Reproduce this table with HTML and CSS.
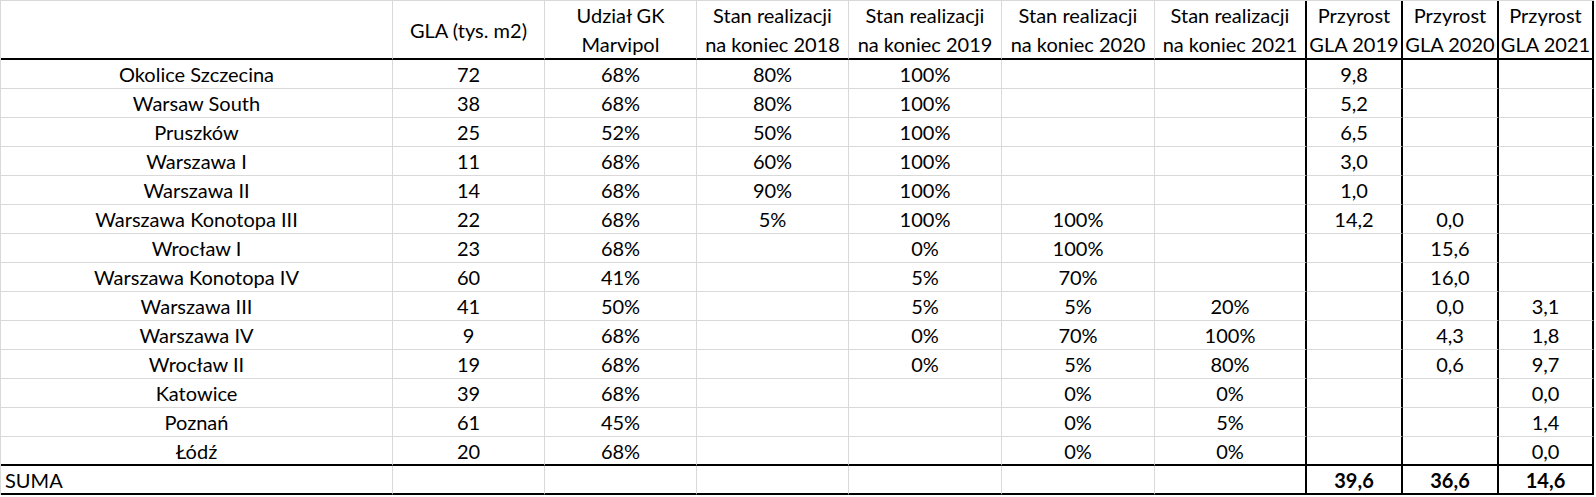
FILE: index.html
```html
<!DOCTYPE html>
<html lang="pl">
<head>
<meta charset="utf-8">
<title>GLA</title>
<link rel="stylesheet" href="styles.css">
</head>
<body>
<div class="sheet" role="table">
  <div class="row head" role="row">
    <div class="c" role="columnheader"></div>
    <div class="c" role="columnheader">GLA (tys. m2)</div>
    <div class="c" role="columnheader">Udział GK<br>Marvipol</div>
    <div class="c" role="columnheader">Stan realizacji<br>na koniec 2018</div>
    <div class="c" role="columnheader">Stan realizacji<br>na koniec 2019</div>
    <div class="c" role="columnheader">Stan realizacji<br>na koniec 2020</div>
    <div class="c k" role="columnheader">Stan realizacji<br>na koniec 2021</div>
    <div class="c k" role="columnheader">Przyrost<br>GLA 2019</div>
    <div class="c k" role="columnheader">Przyrost<br>GLA 2020</div>
    <div class="c k" role="columnheader">Przyrost<br>GLA 2021</div>
  </div>
  <div class="row" role="row"><div class="c">Okolice Szczecina</div><div class="c">72</div><div class="c">68%</div><div class="c">80%</div><div class="c">100%</div><div class="c"></div><div class="c k"></div><div class="c k">9,8</div><div class="c k"></div><div class="c k"></div></div>
  <div class="row" role="row"><div class="c">Warsaw South</div><div class="c">38</div><div class="c">68%</div><div class="c">80%</div><div class="c">100%</div><div class="c"></div><div class="c k"></div><div class="c k">5,2</div><div class="c k"></div><div class="c k"></div></div>
  <div class="row" role="row"><div class="c">Pruszków</div><div class="c">25</div><div class="c">52%</div><div class="c">50%</div><div class="c">100%</div><div class="c"></div><div class="c k"></div><div class="c k">6,5</div><div class="c k"></div><div class="c k"></div></div>
  <div class="row" role="row"><div class="c">Warszawa I</div><div class="c">11</div><div class="c">68%</div><div class="c">60%</div><div class="c">100%</div><div class="c"></div><div class="c k"></div><div class="c k">3,0</div><div class="c k"></div><div class="c k"></div></div>
  <div class="row" role="row"><div class="c">Warszawa II</div><div class="c">14</div><div class="c">68%</div><div class="c">90%</div><div class="c">100%</div><div class="c"></div><div class="c k"></div><div class="c k">1,0</div><div class="c k"></div><div class="c k"></div></div>
  <div class="row" role="row"><div class="c">Warszawa Konotopa III</div><div class="c">22</div><div class="c">68%</div><div class="c">5%</div><div class="c">100%</div><div class="c">100%</div><div class="c k"></div><div class="c k">14,2</div><div class="c k">0,0</div><div class="c k"></div></div>
  <div class="row" role="row"><div class="c">Wrocław I</div><div class="c">23</div><div class="c">68%</div><div class="c"></div><div class="c">0%</div><div class="c">100%</div><div class="c k"></div><div class="c k"></div><div class="c k">15,6</div><div class="c k"></div></div>
  <div class="row" role="row"><div class="c">Warszawa Konotopa IV</div><div class="c">60</div><div class="c">41%</div><div class="c"></div><div class="c">5%</div><div class="c">70%</div><div class="c k"></div><div class="c k"></div><div class="c k">16,0</div><div class="c k"></div></div>
  <div class="row" role="row"><div class="c">Warszawa III</div><div class="c">41</div><div class="c">50%</div><div class="c"></div><div class="c">5%</div><div class="c">5%</div><div class="c k">20%</div><div class="c k"></div><div class="c k">0,0</div><div class="c k">3,1</div></div>
  <div class="row" role="row"><div class="c">Warszawa IV</div><div class="c">9</div><div class="c">68%</div><div class="c"></div><div class="c">0%</div><div class="c">70%</div><div class="c k">100%</div><div class="c k"></div><div class="c k">4,3</div><div class="c k">1,8</div></div>
  <div class="row" role="row"><div class="c">Wrocław II</div><div class="c">19</div><div class="c">68%</div><div class="c"></div><div class="c">0%</div><div class="c">5%</div><div class="c k">80%</div><div class="c k"></div><div class="c k">0,6</div><div class="c k">9,7</div></div>
  <div class="row" role="row"><div class="c">Katowice</div><div class="c">39</div><div class="c">68%</div><div class="c"></div><div class="c"></div><div class="c">0%</div><div class="c k">0%</div><div class="c k"></div><div class="c k"></div><div class="c k">0,0</div></div>
  <div class="row" role="row"><div class="c">Poznań</div><div class="c">61</div><div class="c">45%</div><div class="c"></div><div class="c"></div><div class="c">0%</div><div class="c k">5%</div><div class="c k"></div><div class="c k"></div><div class="c k">1,4</div></div>
  <div class="row last" role="row"><div class="c">Łódź</div><div class="c">20</div><div class="c">68%</div><div class="c"></div><div class="c"></div><div class="c">0%</div><div class="c k">0%</div><div class="c k"></div><div class="c k"></div><div class="c k">0,0</div></div>
  <div class="row sum" role="row"><div class="c left">SUMA</div><div class="c"></div><div class="c"></div><div class="c"></div><div class="c"></div><div class="c"></div><div class="c k"></div><div class="c k b">39,6</div><div class="c k b">36,6</div><div class="c k b">14,6</div></div>
</div>
</body>
</html>
```
FILE: styles.css
```css
html, body {
  margin: 0;
  padding: 0;
  background: #fff;
}
body {
  font-family: Lato, "Liberation Sans", sans-serif;
  font-size: 20px;
  color: #000;
}
.sheet {
  display: grid;
  grid-template-columns: 392px 152px 152px 152px 153px 153px 152px 96px 96px 95px;
  grid-template-rows: 59px repeat(15, 29px);
  width: max-content;
  border-left: 1px solid #d9d9d9;
  border-top: 1px solid #d9d9d9;
}
.row {
  display: contents;
}
.c {
  box-sizing: border-box;
  display: flex;
  align-items: center;
  justify-content: center;
  text-align: center;
  padding: 0 4px;
  border-right: 1px solid #d9d9d9;
  border-bottom: 1px solid #d9d9d9;
  white-space: nowrap;
  line-height: 24px;
}
.head .c {
  line-height: 29px;
  padding-top: 1px;
  border-bottom: 2px solid #000;
}
.c.k {
  border-right: 2px solid #000;
}
.last .c {
  border-bottom: 2px solid #000;
}
.sum .c {
  border-bottom: 2px solid #000;
}
.sum .left {
  justify-content: flex-start;
  padding-left: 4px;
}
.b {
  font-weight: bold;
}
```
